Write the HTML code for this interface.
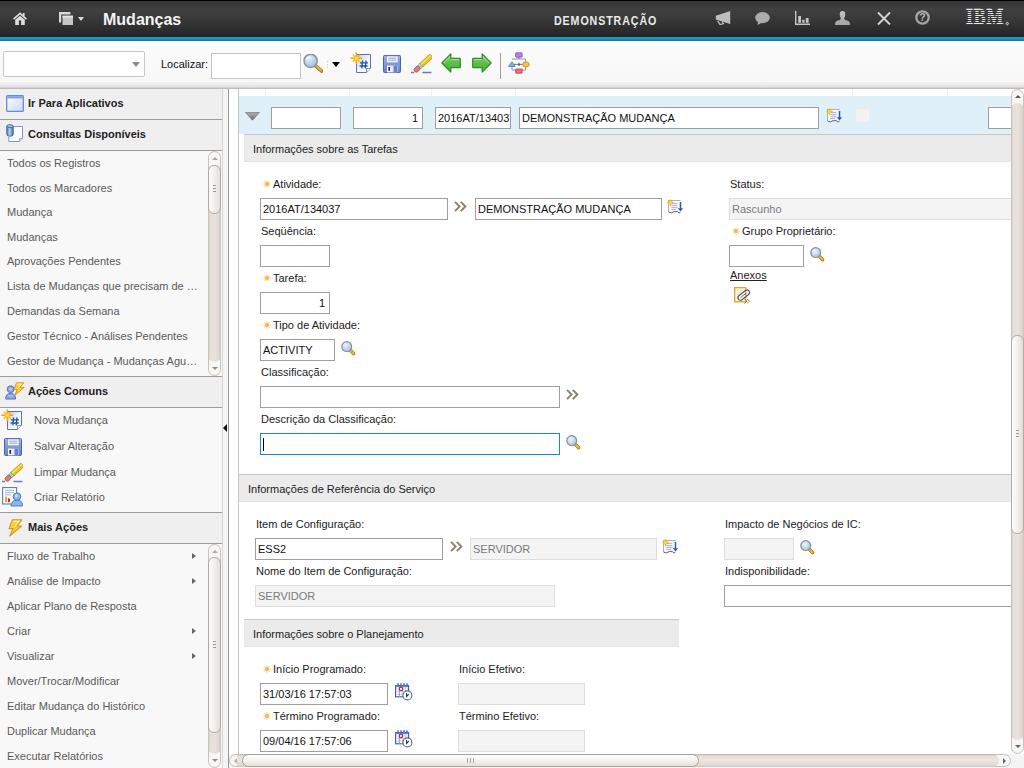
<!DOCTYPE html>
<html><head><meta charset="utf-8"><title>Mudanças</title>
<style>
*{box-sizing:border-box;margin:0;padding:0}
html,body{width:1024px;height:768px;overflow:hidden;background:#fff;font-family:"Liberation Sans",Arial,sans-serif;font-size:11px;color:#222}
#root{position:absolute;left:0;top:0;width:1024px;height:768px;overflow:hidden}
#root div,#root svg,#root span,#root i,#root b{position:absolute;display:block}
#hdr{left:0;top:0;width:1024px;height:37px;background:linear-gradient(#000 0,#000 1px,#343434 1px,#404040 9px,#393939 18px,#2f2f2f 28px,#262626 35px,#202020 37px)}
#hdrline{left:0;top:37px;width:1024px;height:4px;background:linear-gradient(#1e9cd2,#1a8cc0 50%,#1078aa)}
#title{left:103px;top:10px;font-size:16px;font-weight:bold;color:#f4f4f4;line-height:20px;white-space:nowrap}
#demo{left:554px;top:12.5px;font-size:13px;color:#eaeaea;line-height:16px;white-space:nowrap;transform-origin:0 0;transform:scaleX(.82);letter-spacing:1.1px;font-weight:bold}
#tb{left:0;top:41px;width:1024px;height:48px;background:linear-gradient(#fcfcfc 0,#f7f7f7 41px,#eee 42px,#eee 43.5px,#e6e6e6 44.5px,#e4e4e4 45.5px,#d4d4d4 46.5px,#bcbcbc 47.2px,#bcbcbc 48px)}
.inp{background:#fff;border:1px solid #9e9e9e;height:22px;font-size:11px;line-height:20px;padding:0 2px;white-space:nowrap;overflow:hidden;color:#111}
.inp.ro{background:#f4f4f4;border-color:#dedede;color:#7a7a7a}
.lbl{font-size:11px;line-height:14px;white-space:nowrap;color:#222}
#left{left:0;top:89px;width:222px;height:679px;background:#f8f8f8}
.ph{left:0;width:222px;height:32px;background:#efefef;border-top:1px solid #9b9b9b;border-bottom:1px solid #9b9b9b}
.pht{font-weight:bold;font-size:11px;line-height:14px;color:#222;white-space:nowrap;left:28px}
.li{left:7px;font-size:11px;line-height:14px;color:#5a5a5a;white-space:nowrap}
.sec{background:#ebebeb;border-top:1px solid #c8c8c8;border-bottom:1px solid #e2e5e8;height:28px}
.sect{line-height:14px;white-space:nowrap;color:#222}
.req{width:8px;height:8px;border-radius:50%;background:radial-gradient(circle,#f5b040 0,#f7c070 30%,rgba(250,212,150,.7) 55%,rgba(255,255,255,0) 72%)}
.vcap{width:13px;background:#f8f6f4;border:1px solid #c9c0b9;border-radius:6.5px}
.vs{width:13px;border-radius:6.5px;background:linear-gradient(90deg,#c4bab3 0,#e6dfda 2px,#e9e1dc 7px,#e0d7d1 11px,#c9c0b9 13px)}
.va{width:0;height:0;border-left:3px solid transparent;border-right:3px solid transparent}
.va.up{border-bottom:3px solid #aaa}.va.dn{border-top:3px solid #8a8a8a}.va.up.dk{border-bottom-color:#555}.va.dn.dk{border-top-color:#666}
.vth{width:13px;border:1px solid #b3a9a1;border-radius:6px;background:linear-gradient(90deg,#fdfdfc 0,#f3efec 50%,#e4ddd8 100%)}
.grip{width:3px;height:7px;background:repeating-linear-gradient(#999 0,#999 1px,transparent 1px,transparent 3px)}
.sub{width:0;height:0;border-top:3.5px solid transparent;border-bottom:3.5px solid transparent;border-left:4px solid #666}
</style></head><body>
<div id="root">
<div id="hdr"></div><div id="hdrline"></div>

<svg style="left:13px;top:12px" width="14" height="13" viewBox="0 0 14 13"><path d="M7 0.3 L0 6.6 L1.1 7.7 L7 2.5 L12.9 7.7 L14 6.6 L11.6 4.4 V1 H9.8 V2.8 Z" fill="#dcdcdc"/><path d="M2.2 7.8 L7 3.7 L11.8 7.8 V13 H8.1 V8.6 H5.9 V13 H2.2 Z" fill="#dcdcdc"/></svg>
<svg style="left:59px;top:12px" width="14" height="13" viewBox="0 0 14 13"><path d="M0 0 H11.4 V2.4 H2.2 V10.6 H0 Z" fill="#dadada"/><rect x="3.5" y="3.7" width="10.5" height="9.3" fill="#c6c6c6"/><rect x="3.5" y="3.7" width="10.5" height="2" fill="#e4e4e4"/></svg>
<i style="left:78px;top:17px;width:0;height:0;border-left:3.5px solid transparent;border-right:3.5px solid transparent;border-top:4px solid #ddd"></i>
<div id="title">Mudanças</div><div id="demo">DEMONSTRAÇÃO</div>
<svg style="left:715px;top:11px" width="16" height="14" viewBox="0 0 16 14"><path d="M15.2 0 V13 L.8 8.6 V4.8 Z" fill="#bcbcbc"/><path d="M2.6 9.6 L5 13.6 L8.4 12.6 L7 10.6" fill="none" stroke="#bcbcbc" stroke-width="1.3"/></svg>
<svg style="left:755px;top:12px" width="15" height="13" viewBox="0 0 15 13"><ellipse cx="7.5" cy="5.6" rx="7.3" ry="5.6" fill="#acacac"/><path d="M3 8.5 L2.6 13 L7.4 10.4 Z" fill="#acacac"/></svg>
<svg style="left:795px;top:11px" width="15" height="14" viewBox="0 0 15 14"><path d="M.7 0 V13.2 H15" fill="none" stroke="#c6c6c6" stroke-width="1.4"/><rect x="3.2" y="5" width="2.8" height="6.8" fill="#c6c6c6"/><rect x="7.2" y="8.8" width="2.4" height="3" fill="#c6c6c6"/><rect x="10.8" y="7" width="2.8" height="4.8" fill="#c6c6c6"/></svg>
<svg style="left:835px;top:11px" width="15" height="14" viewBox="0 0 15 14"><defs><linearGradient id="pg" x1="0" y1="0" x2="0" y2="1"><stop offset="0" stop-color="#c4c4c4"/><stop offset="1" stop-color="#a2a2a2"/></linearGradient></defs><path d="M7.5 0 C9.6 0 10.4 1.6 10.3 3.6 C10.2 5.4 9.6 6.4 9.2 7 C9.2 8.6 10 9 12 9.6 C14.2 10.3 15 11.4 15 14 H0 C0 11.4 0.8 10.3 3 9.6 C5 9 5.8 8.6 5.8 7 C5.4 6.4 4.8 5.4 4.7 3.6 C4.6 1.6 5.4 0 7.5 0 Z" fill="url(#pg)"/></svg>
<svg style="left:877px;top:12px" width="14" height="13" viewBox="0 0 14 13"><path d="M1 0.5 L13 12.5 M13 0.5 L1 12.5" stroke="#d0d0d0" stroke-width="2" fill="none"/></svg>
<svg style="left:915px;top:10px" width="15" height="15" viewBox="0 0 15 15"><circle cx="7.5" cy="7.5" r="6.2" fill="none" stroke="#a6a6a6" stroke-width="2.3"/><text x="7.5" y="11.2" text-anchor="middle" font-family="Liberation Sans,sans-serif" font-weight="bold" font-size="10.5" fill="#b8b8b8">?</text></svg>
<div id="ibm" style="left:966px;top:8px;width:39px;height:17px;overflow:hidden"><span style="left:0;top:-6.3px;font-family:'Liberation Serif',serif;font-weight:bold;font-size:24px;line-height:28px;color:#e6e6e6;-webkit-text-stroke:.5px #e6e6e6;transform-origin:0 0;transform:scaleX(.74);letter-spacing:1.2px;white-space:nowrap">IBM</span><i style="left:0;top:.6px;width:40px;height:17px;background:repeating-linear-gradient(transparent 0,transparent 1.05px,#3a3a3a 1.05px,#3a3a3a 1.95px)"></i></div>
<i style="left:1005.5px;top:21.5px;width:2.5px;height:2.5px;transform:rotate(45deg);border:.7px solid #aaa"></i>
<div id="tb"></div>
<div class="inp" style="left:3px;top:51px;width:142px;height:26px;border-color:#c8c8c8;border-radius:2px"></div>
<i style="left:132px;top:62px;width:0;height:0;border-left:4.5px solid transparent;border-right:4.5px solid transparent;border-top:5px solid #8a8a8a"></i>
<div class="lbl" style="left:161px;top:57px;color:#111">Localizar:</div>
<div class="inp" style="left:211px;top:53px;width:90px;height:26px;border-color:#c4c4c4"></div>
<svg style="left:303px;top:54px" width="20" height="19" viewBox="0 0 20 19"><defs><radialGradient id="mgL" cx="38%" cy="32%" r="75%"><stop offset="0" stop-color="#e4f0fb"/><stop offset=".5" stop-color="#bcd6f0"/><stop offset="1" stop-color="#9cc0e6"/></radialGradient></defs>
<path d="M12.6 11.8 L18.6 17" stroke="#9c6410" stroke-width="3.6" stroke-linecap="round"/><path d="M12.8 11.8 L18.4 16.7" stroke="#f2b234" stroke-width="2.1" stroke-linecap="round"/>
<circle cx="7.6" cy="6.8" r="6.6" fill="url(#mgL)" stroke="#8c949e" stroke-width="1.5"/><path d="M3.6 6.2 A4.2 4.2 0 0 1 7.4 2.8" stroke="#fff" stroke-width="1.2" fill="none" opacity=".8"/></svg>
<i style="left:327px;top:61px;width:1px;height:9px;background:repeating-linear-gradient(#c8c8c8 0,#c8c8c8 1px,transparent 1px,transparent 3px)"></i>
<i style="left:332px;top:62px;width:0;height:0;border-left:4.7px solid transparent;border-right:4.7px solid transparent;border-top:5.2px solid #000"></i>
<svg style="left:350px;top:52px" width="22" height="22" viewBox="0 0 22 22"><defs><linearGradient id="ng" x1="0" y1="0" x2="1" y2="1"><stop offset="0" stop-color="#b9c9e8"/><stop offset=".5" stop-color="#f1f5fc"/><stop offset="1" stop-color="#fff"/></linearGradient></defs>
<path d="M6.5 2.5 H20.5 V16.5 L16.5 20.5 H6.5 Z" fill="url(#ng)" stroke="#6070a8" stroke-width="1"/><path d="M20.5 16.5 H16.5 V20.5" fill="#fff" stroke="#6070a8" stroke-width=".8"/>
<path d="M12.6 8.4 L11.8 16.4 M16 8.4 L15.2 16.4 M10 10.8 H18 M9.6 14 H17.6" stroke="#1c58a8" stroke-width="1.35" fill="none"/><g transform="translate(.8 .8)"><path d="M5.5 -.4 V11.4 M-.4 5.5 H11.4" stroke="#f8a404" stroke-width="1.5"/><path d="M2 2 L9 9 M9 2 L2 9" stroke="#f9b41c" stroke-width="1.3"/><circle cx="5.5" cy="5.5" r="2.2" fill="#fbc410"/><circle cx="5.5" cy="5.5" r="1.2" fill="#fff04a"/></g></svg>
<svg style="left:383px;top:55px" width="18" height="18" viewBox="0 0 18 18"><defs><linearGradient id="sg" x1="0" y1="0" x2="0" y2="1"><stop offset="0" stop-color="#9db0e6"/><stop offset="1" stop-color="#6a82cc"/></linearGradient><linearGradient id="sg2" x1="0" y1="0" x2="1" y2="0"><stop offset="0" stop-color="#fff"/><stop offset="1" stop-color="#c8d0e6"/></linearGradient></defs>
<rect x=".5" y=".5" width="17" height="17" rx="1" fill="url(#sg)" stroke="#4a62b2"/><rect x="3.5" y="1" width="11.5" height="6.8" fill="#f2f5fb" stroke="#7a8cc4" stroke-width=".6"/><path d="M5.4 3.2 H13.2 M5.4 5.2 H13.2" stroke="#8f9bb8" stroke-width=".9"/>
<rect x="4" y="10.6" width="10.6" height="6.8" fill="url(#sg2)"/><rect x="10.6" y="10.6" width="3.4" height="6.8" fill="#6980c6"/><rect x="5.4" y="12" width="1.6" height="3.8" fill="#222"/></svg>
<svg style="left:411px;top:54px" width="21" height="20" viewBox="0 0 21 20"><path d="M0 18.4 H3.2 M11.4 18.4 H20.4" stroke="#6b78c8" stroke-width="1.5"/>
<g transform="translate(5.6 15.6) rotate(-43)"><rect x="-2.6" y="-2.3" width="6.4" height="4.6" rx="2.2" fill="#dd7a6c" stroke="#a8483e" stroke-width=".7"/><rect x="3.6" y="-2.3" width="3" height="4.6" fill="#5fb4b0" stroke="#3f7e7c" stroke-width=".4"/><path d="M4.6 -2.3 V2.3 M5.8 -2.3 V2.3" stroke="#fff" stroke-width=".6"/><path d="M6.6 -2.3 H19.6 L20.4 -1.4 V2.3 H6.6 Z" fill="#e8c020" stroke="#9c7c14" stroke-width=".6"/><rect x="6.8" y="-1.4" width="13.2" height="1.4" fill="#fae36a"/></g></svg>
<svg style="left:441px;top:53px" width="20" height="20" viewBox="0 0 20 20"><defs><linearGradient id="agl" x1="0" y1="0" x2="0" y2="1"><stop offset="0" stop-color="#9cdc86"/><stop offset=".45" stop-color="#62bf50"/><stop offset="1" stop-color="#48ac3a"/></linearGradient></defs>
<path d="M9.8 .9 L.9 10 L9.8 19.1 V14.6 H18.8 Q19.3 14.6 19.3 14 V6 Q19.3 5.4 18.8 5.4 H9.8 Z" fill="url(#agl)" stroke="#2c8c26" stroke-width="1.2" stroke-linejoin="round"/><path d="M8.8 3.8 L2.8 10 M10.4 6.6 H18.2" stroke="#c6eeb4" stroke-width="1" fill="none" opacity=".75"/></svg>
<svg style="left:472px;top:53px" width="20" height="20" viewBox="0 0 20 20"><g transform="translate(20 0) scale(-1 1)"><defs><linearGradient id="agr" x1="0" y1="0" x2="0" y2="1"><stop offset="0" stop-color="#9cdc86"/><stop offset=".45" stop-color="#62bf50"/><stop offset="1" stop-color="#48ac3a"/></linearGradient></defs>
<path d="M9.8 .9 L.9 10 L9.8 19.1 V14.6 H18.8 Q19.3 14.6 19.3 14 V6 Q19.3 5.4 18.8 5.4 H9.8 Z" fill="url(#agr)" stroke="#2c8c26" stroke-width="1.2" stroke-linejoin="round"/><path d="M8.8 3.8 L2.8 10 M10.4 6.6 H18.2" stroke="#c6eeb4" stroke-width="1" fill="none" opacity=".75"/></g></svg>
<i style="left:500px;top:53px;width:1px;height:26px;background:#a89f90"></i>
<svg style="left:508px;top:52px" width="22" height="22" viewBox="0 0 22 22"><path d="M4 7 H17.6 V18 H4 V14" stroke="#8a8a96" stroke-width=".9" fill="none"/><path d="M11 5 V7 M6 12.4 H15" stroke="#6a6a76" stroke-width=".9" fill="none"/><path d="M11 10.8 V14" stroke="#444" stroke-width="1"/>
<rect x="7.6" y=".8" width="6.6" height="4.4" rx=".6" fill="#b97fe6" stroke="#8a50c0" stroke-width=".8"/><path d="M.6 14.4 L3.9 9.8 L7.2 14.4 Z" fill="#7db4f0" stroke="#3e78c0" stroke-width=".8"/><ellipse cx="17.9" cy="12.4" rx="3.3" ry="2.5" fill="#f8c438" stroke="#c08c18" stroke-width=".8"/><rect x="7.6" y="17" width="6.6" height="4.2" rx=".6" fill="#ee7078" stroke="#b8404a" stroke-width=".8"/></svg>
<div id="left"></div>
<div class="ph" style="top:89px;height:31px;border-top:0"></div><svg style="left:6px;top:95px" width="18" height="17" viewBox="0 0 18 17"><defs><linearGradient id="apg" x1="0" y1="0" x2="1" y2="1"><stop offset="0" stop-color="#fff"/><stop offset="1" stop-color="#c9d8f0"/></linearGradient></defs><rect x=".7" y=".7" width="16.6" height="15.6" rx=".8" fill="url(#apg)" stroke="#6a8ad4" stroke-width="1.3"/><rect x="1.2" y="1.2" width="15.6" height="2.2" fill="#7fa0e2"/></svg><div class="pht" style="top:96px">Ir Para Aplicativos</div>
<div class="ph" style="top:119px"></div><svg style="left:6px;top:124px" width="18" height="19" viewBox="0 0 18 19"><path d="M5.5 2.5 H16.5 V14.5 L13.5 17.5 H2.8 V13" fill="#fbfcfe" stroke="#8a96b8" stroke-width="1"/><path d="M16.5 14.5 H13.5 V17.5" fill="#e4e8f2" stroke="#8a96b8" stroke-width=".8"/>
<defs><linearGradient id="qg" x1="0" y1="0" x2="1" y2="0"><stop offset="0" stop-color="#4a78b8"/><stop offset=".45" stop-color="#b5d2ee"/><stop offset="1" stop-color="#3e68a8"/></linearGradient></defs><path d="M.8 2.2 V10.6 Q.8 12.2 4 12.2 Q7.2 12.2 7.2 10.6 V2.2 Z" fill="url(#qg)" stroke="#2f5596" stroke-width=".8"/><ellipse cx="4" cy="2.2" rx="3.2" ry="1.5" fill="#9cc0e6" stroke="#2f5596" stroke-width=".8"/></svg><div class="pht" style="top:127px">Consultas Disponíveis</div>
<div class="li" style="top:156px">Todos os Registros</div>
<div class="li" style="top:181px">Todos os Marcadores</div>
<div class="li" style="top:205px">Mudança</div>
<div class="li" style="top:230px">Mudanças</div>
<div class="li" style="top:254px">Aprovações Pendentes</div>
<div class="li" style="top:279px">Lista de Mudanças que precisam de …</div>
<div class="li" style="top:304px">Demandas da Semana</div>
<div class="li" style="top:329px">Gestor Técnico - Análises Pendentes</div>
<div class="li" style="top:354px">Gestor de Mudança - Mudanças Agu…</div>
<div class="vcap" style="left:208px;top:151px;height:225px"></div>
<div class="vs" style="left:208px;top:165px;height:197px"></div>
<i class="va up" style="left:211.5px;top:157px"></i><i class="va dn" style="left:211.5px;top:367px"></i>
<div class="vth" style="left:208px;top:165px;height:49px"></div><i class="grip" style="left:213px;top:185px"></i>
<div class="ph" style="top:376px"></div><svg style="left:5px;top:382px" width="20" height="18" viewBox="0 0 20 18"><circle cx="5.6" cy="7.2" r="3.4" fill="#8aa6e0" stroke="#5877c0" stroke-width="1"/><path d="M.6 17 Q.6 11.4 5.6 11.4 Q10.6 11.4 10.6 17 Z" fill="#8aa6e0" stroke="#5877c0" stroke-width="1"/><circle cx="5.6" cy="7" r="1.6" fill="#b8c9f0"/><path d="M3.4 14 H7.8" stroke="#b8c9f0" stroke-width="1.2"/>
<path d="M11.6 .8 H18.8 L15 5.4 H19.2 L9.6 13.4 L12.4 7.6 H8.8 Z" fill="#f8cf3a" stroke="#d9971e" stroke-width="1" stroke-linejoin="round"/><path d="M12.4 2 H16.4 L13 6.4" stroke="#fff2a8" stroke-width="1" fill="none"/></svg><div class="pht" style="top:384px">Ações Comuns</div>
<svg style="left:1px;top:409px" width="22" height="22" viewBox="0 0 22 22"><defs><linearGradient id="ng" x1="0" y1="0" x2="1" y2="1"><stop offset="0" stop-color="#b9c9e8"/><stop offset=".5" stop-color="#f1f5fc"/><stop offset="1" stop-color="#fff"/></linearGradient></defs>
<path d="M6.5 2.5 H20.5 V16.5 L16.5 20.5 H6.5 Z" fill="url(#ng)" stroke="#6070a8" stroke-width="1"/><path d="M20.5 16.5 H16.5 V20.5" fill="#fff" stroke="#6070a8" stroke-width=".8"/>
<path d="M12.6 8.4 L11.8 16.4 M16 8.4 L15.2 16.4 M10 10.8 H18 M9.6 14 H17.6" stroke="#1c58a8" stroke-width="1.35" fill="none"/><g transform="translate(.8 .8)"><path d="M5.5 -.4 V11.4 M-.4 5.5 H11.4" stroke="#f8a404" stroke-width="1.5"/><path d="M2 2 L9 9 M9 2 L2 9" stroke="#f9b41c" stroke-width="1.3"/><circle cx="5.5" cy="5.5" r="2.2" fill="#fbc410"/><circle cx="5.5" cy="5.5" r="1.2" fill="#fff04a"/></g></svg>
<div class="li" style="left:34px;top:413px">Nova Mudança</div>
<svg style="left:4px;top:438px" width="18" height="18" viewBox="0 0 18 18"><defs><linearGradient id="sg" x1="0" y1="0" x2="0" y2="1"><stop offset="0" stop-color="#9db0e6"/><stop offset="1" stop-color="#6a82cc"/></linearGradient><linearGradient id="sg2" x1="0" y1="0" x2="1" y2="0"><stop offset="0" stop-color="#fff"/><stop offset="1" stop-color="#c8d0e6"/></linearGradient></defs>
<rect x=".5" y=".5" width="17" height="17" rx="1" fill="url(#sg)" stroke="#4a62b2"/><rect x="3.5" y="1" width="11.5" height="6.8" fill="#f2f5fb" stroke="#7a8cc4" stroke-width=".6"/><path d="M5.4 3.2 H13.2 M5.4 5.2 H13.2" stroke="#8f9bb8" stroke-width=".9"/>
<rect x="4" y="10.6" width="10.6" height="6.8" fill="url(#sg2)"/><rect x="10.6" y="10.6" width="3.4" height="6.8" fill="#6980c6"/><rect x="5.4" y="12" width="1.6" height="3.8" fill="#222"/></svg>
<div class="li" style="left:34px;top:439px">Salvar Alteração</div>
<svg style="left:2px;top:463px" width="21" height="20" viewBox="0 0 21 20"><path d="M0 18.4 H3.2 M11.4 18.4 H20.4" stroke="#6b78c8" stroke-width="1.5"/>
<g transform="translate(5.6 15.6) rotate(-43)"><rect x="-2.6" y="-2.3" width="6.4" height="4.6" rx="2.2" fill="#dd7a6c" stroke="#a8483e" stroke-width=".7"/><rect x="3.6" y="-2.3" width="3" height="4.6" fill="#5fb4b0" stroke="#3f7e7c" stroke-width=".4"/><path d="M4.6 -2.3 V2.3 M5.8 -2.3 V2.3" stroke="#fff" stroke-width=".6"/><path d="M6.6 -2.3 H19.6 L20.4 -1.4 V2.3 H6.6 Z" fill="#e8c020" stroke="#9c7c14" stroke-width=".6"/><rect x="6.8" y="-1.4" width="13.2" height="1.4" fill="#fae36a"/></g></svg>
<div class="li" style="left:34px;top:465px">Limpar Mudança</div>
<svg style="left:2px;top:487px" width="21" height="20" viewBox="0 0 21 20"><rect x=".6" y=".6" width="14" height="16.4" fill="#fbfcff" stroke="#6478b8" stroke-width="1.1"/><path d="M3 3.4 H12 M3 5.6 H12 M3 7.8 H9" stroke="#9ea9cc" stroke-width=".9"/><rect x="3" y="9.6" width="2" height="5.6" fill="#f0a818"/><rect x="6" y="11.4" width="2" height="3.8" fill="#d8262c"/>
<circle cx="15" cy="9.6" r="3.8" fill="#8ab4ea" stroke="#4e80c8" stroke-width="1"/><path d="M9 19 Q9 13.2 15 13.2 Q21 13.2 20.4 19 Z" fill="#8ab4ea" stroke="#4e80c8" stroke-width="1"/><circle cx="14.4" cy="8.8" r="1.6" fill="#c4dcf6"/></svg>
<div class="li" style="left:34px;top:490px">Criar Relatório</div>
<div class="ph" style="top:512px"></div><svg style="left:8px;top:519px" width="15" height="18" viewBox="0 0 15 18"><path d="M4.4 .8 H13.8 L9 7 H13.6 L1.6 17.2 L5.2 9.6 H1 Z" fill="#f8cf3a" stroke="#d9971e" stroke-width="1.1" stroke-linejoin="round"/><path d="M5.4 2.2 H11 L6.6 8" stroke="#fff4b0" stroke-width="1.1" fill="none"/></svg><div class="pht" style="top:520px">Mais Ações</div>
<div class="li" style="top:549px">Fluxo de Trabalho</div>
<i class="sub" style="left:192px;top:553px"></i>
<div class="li" style="top:574px">Análise de Impacto</div>
<i class="sub" style="left:192px;top:578px"></i>
<div class="li" style="top:599px">Aplicar Plano de Resposta</div>
<div class="li" style="top:624px">Criar</div>
<i class="sub" style="left:192px;top:628px"></i>
<div class="li" style="top:649px">Visualizar</div>
<i class="sub" style="left:192px;top:653px"></i>
<div class="li" style="top:674px">Mover/Trocar/Modificar</div>
<div class="li" style="top:699px">Editar Mudança do Histórico</div>
<div class="li" style="top:724px">Duplicar Mudança</div>
<div class="li" style="top:749px">Executar Relatórios</div>
<div class="vcap" style="left:208px;top:544px;height:224px"></div>
<div class="vs" style="left:208px;top:558px;height:196px"></div>
<i class="va up" style="left:211.5px;top:550px"></i><i class="va dn" style="left:211.5px;top:759px"></i>
<div class="vth" style="left:208px;top:557px;height:176px"></div><i class="grip" style="left:213px;top:641px"></i>
<div style="left:222px;top:89px;width:7px;height:679px;background:#f4f4f4;border-left:1px solid #d6d6d6;border-right:1px solid #9a9a9a"></div>
<i style="left:223px;top:424px;width:0;height:0;border-top:4px solid transparent;border-bottom:4px solid transparent;border-right:4px solid #111"></i>
<div style="left:229px;top:89px;width:782px;height:665px;background:#fff"></div>
<i style="left:238px;top:89px;width:1px;height:665px;background:#c6c6c6"></i>
<i style="left:265px;top:89px;width:1px;height:45px;background:#f0f0f0"></i>
<i style="left:349px;top:89px;width:1px;height:45px;background:#f0f0f0"></i>
<i style="left:431px;top:89px;width:1px;height:45px;background:#f0f0f0"></i>
<i style="left:515px;top:89px;width:1px;height:45px;background:#f0f0f0"></i>
<i style="left:852px;top:89px;width:1px;height:45px;background:#f0f0f0"></i>
<i style="left:947px;top:89px;width:1px;height:45px;background:#f0f0f0"></i>
<div style="left:239px;top:96px;width:772px;height:38px;background:#dff0f8"></div>
<svg style="left:245px;top:112px" width="15" height="9" viewBox="0 0 15 9"><defs><linearGradient id="tg" x1="0" y1="0" x2="0" y2="1"><stop offset="0" stop-color="#b8b4b4"/><stop offset="1" stop-color="#6a6666"/></linearGradient></defs><path d="M.6 .6 H14.4 L7.5 8.2 Z" fill="url(#tg)" stroke="#7a7676" stroke-width=".8"/></svg>
<div class="inp" style="left:271px;top:107px;width:70px;"></div>
<div class="inp" style="left:353px;top:107px;width:70px;text-align:right;padding-right:4px;">1</div>
<div class="inp" style="left:435px;top:107px;width:76px;">2016AT/134037</div>
<div class="inp" style="left:519px;top:107px;width:300px;">DEMONSTRAÇÃO MUDANÇA</div>
<svg style="left:825px;top:108px" width="18" height="16" viewBox="0 0 18 16"><path d="M2.5 13 V1.5 H14.5" fill="none" stroke="#5c6898" stroke-width="1"/><path d="M2.5 1.5 H14.5 V12.6 L13.2 14.2 L11.4 12.6 H8.2 Q5.4 15 2.5 13 Z" fill="#f6f8fd"/><path d="M2.5 13 Q5.4 15 8.2 12.6 H11.4 L13.2 14.2 L14.4 12.8" fill="none" stroke="#5c6060" stroke-width="1"/><path d="M5.4 4.6 H11.4 M5.4 6.6 H11.4 M5.4 8.6 H11.4 M5.4 10.6 H10" stroke="#a4a8dc" stroke-width=".9"/>
<path d="M14.5 3 V11" stroke="#2c58c0" stroke-width="1.5"/><path d="M11.9 9.2 H17.1 L14.5 12.6 Z" fill="#2c58c0"/><path d="M4.4 -.4 L5.6 2.3 L8.2 3.5 L5.6 4.7 L4.4 7.4 L3.2 4.7 L.6 3.5 L3.2 2.3 Z" fill="#f6b40c"/><circle cx="4.4" cy="3.5" r="1.5" fill="#ffdf20"/></svg>
<i style="left:856px;top:109px;width:13px;height:13px;background:#f4f1ef;border-radius:1px"></i>
<div class="inp" style="left:988px;top:107px;width:30px;"></div>
<div class="sec" style="left:244px;top:134px;width:767px"></div><div class="sect" style="left:253px;top:142px">Informações sobre as Tarefas</div>
<svg style="left:263px;top:180px" width="8" height="8" viewBox="0 0 8 8"><path d="M4 .2 V7.8 M.2 4 H7.8 M1.3 1.3 L6.7 6.7 M6.7 1.3 L1.3 6.7" stroke="#fad29a" stroke-width="1.1"/><circle cx="4" cy="4" r="2" fill="#f7b955"/></svg><div class="lbl" style="left:273px;top:177px">Atividade:</div>
<div class="inp" style="left:260px;top:198px;width:188px;">2016AT/134037</div>
<svg style="left:454px;top:201px" width="13" height="11" viewBox="0 0 13 11"><path d="M1 .8 L5.6 5.5 L1 10.2 M6.8 .8 L11.4 5.5 L6.8 10.2" fill="none" stroke="#8c8068" stroke-width="1.9"/></svg>
<div class="inp" style="left:475px;top:198px;width:187px;">DEMONSTRAÇÃO MUDANÇA</div>
<svg style="left:666px;top:199px" width="18" height="16" viewBox="0 0 18 16"><path d="M2.5 13 V1.5 H14.5" fill="none" stroke="#5c6898" stroke-width="1"/><path d="M2.5 1.5 H14.5 V12.6 L13.2 14.2 L11.4 12.6 H8.2 Q5.4 15 2.5 13 Z" fill="#f6f8fd"/><path d="M2.5 13 Q5.4 15 8.2 12.6 H11.4 L13.2 14.2 L14.4 12.8" fill="none" stroke="#5c6060" stroke-width="1"/><path d="M5.4 4.6 H11.4 M5.4 6.6 H11.4 M5.4 8.6 H11.4 M5.4 10.6 H10" stroke="#a4a8dc" stroke-width=".9"/>
<path d="M14.5 3 V11" stroke="#2c58c0" stroke-width="1.5"/><path d="M11.9 9.2 H17.1 L14.5 12.6 Z" fill="#2c58c0"/><path d="M4.4 -.4 L5.6 2.3 L8.2 3.5 L5.6 4.7 L4.4 7.4 L3.2 4.7 L.6 3.5 L3.2 2.3 Z" fill="#f6b40c"/><circle cx="4.4" cy="3.5" r="1.5" fill="#ffdf20"/></svg>
<div class="lbl" style="left:261px;top:224px">Seqüência:</div>
<div class="inp" style="left:260px;top:245px;width:70px;"></div>
<svg style="left:263px;top:274px" width="8" height="8" viewBox="0 0 8 8"><path d="M4 .2 V7.8 M.2 4 H7.8 M1.3 1.3 L6.7 6.7 M6.7 1.3 L1.3 6.7" stroke="#fad29a" stroke-width="1.1"/><circle cx="4" cy="4" r="2" fill="#f7b955"/></svg><div class="lbl" style="left:273px;top:271px">Tarefa:</div>
<div class="inp" style="left:260px;top:292px;width:70px;text-align:right;padding-right:4px;">1</div>
<svg style="left:263px;top:321px" width="8" height="8" viewBox="0 0 8 8"><path d="M4 .2 V7.8 M.2 4 H7.8 M1.3 1.3 L6.7 6.7 M6.7 1.3 L1.3 6.7" stroke="#fad29a" stroke-width="1.1"/><circle cx="4" cy="4" r="2" fill="#f7b955"/></svg><div class="lbl" style="left:273px;top:318px">Tipo de Atividade:</div>
<div class="inp" style="left:260px;top:339px;width:75px;">ACTIVITY</div>
<svg style="left:341px;top:341px" width="15" height="15" viewBox="0 0 15 15"><defs><radialGradient id="mgS" cx="40%" cy="35%" r="75%"><stop offset="0" stop-color="#eef5fc"/><stop offset=".55" stop-color="#c0d6f2"/><stop offset="1" stop-color="#a4c2e8"/></radialGradient></defs>
<path d="M9.8 9.8 L12.6 12.6" stroke="#a07018" stroke-width="3.4" stroke-linecap="round"/><path d="M10 10 L12.5 12.5" stroke="#f0b830" stroke-width="2" stroke-linecap="round"/>
<circle cx="5.7" cy="5.6" r="4.9" fill="url(#mgS)" stroke="#8a8e98" stroke-width="1.2"/></svg>
<div class="lbl" style="left:261px;top:365px">Classificação:</div>
<div class="inp" style="left:260px;top:386px;width:300px;"></div>
<svg style="left:566px;top:389px" width="13" height="11" viewBox="0 0 13 11"><path d="M1 .8 L5.6 5.5 L1 10.2 M6.8 .8 L11.4 5.5 L6.8 10.2" fill="none" stroke="#8c8068" stroke-width="1.9"/></svg>
<div class="lbl" style="left:261px;top:412px">Descrição da Classificação:</div>
<div class="inp" style="left:260px;top:433px;width:300px;border-color:#1a8ac6;"></div>
<i style="left:263px;top:438px;width:1px;height:13px;background:#000"></i>
<svg style="left:566px;top:435px" width="15" height="15" viewBox="0 0 15 15"><defs><radialGradient id="mgS" cx="40%" cy="35%" r="75%"><stop offset="0" stop-color="#eef5fc"/><stop offset=".55" stop-color="#c0d6f2"/><stop offset="1" stop-color="#a4c2e8"/></radialGradient></defs>
<path d="M9.8 9.8 L12.6 12.6" stroke="#a07018" stroke-width="3.4" stroke-linecap="round"/><path d="M10 10 L12.5 12.5" stroke="#f0b830" stroke-width="2" stroke-linecap="round"/>
<circle cx="5.7" cy="5.6" r="4.9" fill="url(#mgS)" stroke="#8a8e98" stroke-width="1.2"/></svg>
<div class="lbl" style="left:730px;top:177px">Status:</div>
<div class="inp ro" style="left:729px;top:198px;width:290px;">Rascunho</div>
<svg style="left:732px;top:227px" width="8" height="8" viewBox="0 0 8 8"><path d="M4 .2 V7.8 M.2 4 H7.8 M1.3 1.3 L6.7 6.7 M6.7 1.3 L1.3 6.7" stroke="#fad29a" stroke-width="1.1"/><circle cx="4" cy="4" r="2" fill="#f7b955"/></svg><div class="lbl" style="left:742px;top:224px">Grupo Proprietário:</div>
<div class="inp" style="left:729px;top:245px;width:75px;"></div>
<svg style="left:810px;top:247px" width="15" height="15" viewBox="0 0 15 15"><defs><radialGradient id="mgS" cx="40%" cy="35%" r="75%"><stop offset="0" stop-color="#eef5fc"/><stop offset=".55" stop-color="#c0d6f2"/><stop offset="1" stop-color="#a4c2e8"/></radialGradient></defs>
<path d="M9.8 9.8 L12.6 12.6" stroke="#a07018" stroke-width="3.4" stroke-linecap="round"/><path d="M10 10 L12.5 12.5" stroke="#f0b830" stroke-width="2" stroke-linecap="round"/>
<circle cx="5.7" cy="5.6" r="4.9" fill="url(#mgS)" stroke="#8a8e98" stroke-width="1.2"/></svg>
<div class="lbl" style="left:730px;top:268px;text-decoration:underline">Anexos</div>
<svg style="left:734px;top:287px" width="18" height="17" viewBox="0 0 18 17"><rect x=".7" y=".7" width="11" height="14" fill="#fffefa" stroke="#e2a212" stroke-width="1.3"/><path d="M2.8 3.2 H8.6 M2.8 5.2 H8.6 M2.8 7.2 H6" stroke="#ecd4a0" stroke-width=".9"/>
<rect x="3" y="5.6" width="13.4" height="5" rx="2.5" transform="rotate(-38 9.7 8.1)" fill="none" stroke="#4c5478" stroke-width="1.2"/><path d="M6.6 10.5 L12.4 6" stroke="#4c5478" stroke-width=".9"/>
<path d="M10.4 12 L12.8 14.2 L10.4 16.4" fill="none" stroke="#6a6458" stroke-width="1"/><path d="M13 12 L15.4 14.2 L13 16.4" fill="none" stroke="#b8922c" stroke-width="1"/></svg>
<div class="sec" style="left:239px;top:474px;width:772px"></div><div class="sect" style="left:248px;top:482px">Informações de Referência do Serviço</div>
<div class="lbl" style="left:256px;top:517px">Item de Configuração:</div>
<div class="inp" style="left:255px;top:538px;width:188px;">ESS2</div>
<svg style="left:450px;top:541px" width="13" height="11" viewBox="0 0 13 11"><path d="M1 .8 L5.6 5.5 L1 10.2 M6.8 .8 L11.4 5.5 L6.8 10.2" fill="none" stroke="#8c8068" stroke-width="1.9"/></svg>
<div class="inp ro" style="left:470px;top:538px;width:187px;">SERVIDOR</div>
<svg style="left:661px;top:539px" width="18" height="16" viewBox="0 0 18 16"><path d="M2.5 13 V1.5 H14.5" fill="none" stroke="#5c6898" stroke-width="1"/><path d="M2.5 1.5 H14.5 V12.6 L13.2 14.2 L11.4 12.6 H8.2 Q5.4 15 2.5 13 Z" fill="#f6f8fd"/><path d="M2.5 13 Q5.4 15 8.2 12.6 H11.4 L13.2 14.2 L14.4 12.8" fill="none" stroke="#5c6060" stroke-width="1"/><path d="M5.4 4.6 H11.4 M5.4 6.6 H11.4 M5.4 8.6 H11.4 M5.4 10.6 H10" stroke="#a4a8dc" stroke-width=".9"/>
<path d="M14.5 3 V11" stroke="#2c58c0" stroke-width="1.5"/><path d="M11.9 9.2 H17.1 L14.5 12.6 Z" fill="#2c58c0"/><path d="M4.4 -.4 L5.6 2.3 L8.2 3.5 L5.6 4.7 L4.4 7.4 L3.2 4.7 L.6 3.5 L3.2 2.3 Z" fill="#f6b40c"/><circle cx="4.4" cy="3.5" r="1.5" fill="#ffdf20"/></svg>
<div class="lbl" style="left:256px;top:564px">Nome do Item de Configuração:</div>
<div class="inp ro" style="left:255px;top:585px;width:300px;">SERVIDOR</div>
<div class="lbl" style="left:725px;top:517px">Impacto de Negócios de IC:</div>
<div class="inp ro" style="left:724px;top:538px;width:70px;"></div>
<svg style="left:800px;top:540px" width="15" height="15" viewBox="0 0 15 15"><defs><radialGradient id="mgS" cx="40%" cy="35%" r="75%"><stop offset="0" stop-color="#eef5fc"/><stop offset=".55" stop-color="#c0d6f2"/><stop offset="1" stop-color="#a4c2e8"/></radialGradient></defs>
<path d="M9.8 9.8 L12.6 12.6" stroke="#a07018" stroke-width="3.4" stroke-linecap="round"/><path d="M10 10 L12.5 12.5" stroke="#f0b830" stroke-width="2" stroke-linecap="round"/>
<circle cx="5.7" cy="5.6" r="4.9" fill="url(#mgS)" stroke="#8a8e98" stroke-width="1.2"/></svg>
<div class="lbl" style="left:725px;top:564px">Indisponibilidade:</div>
<div class="inp" style="left:724px;top:585px;width:300px;"></div>
<div class="sec" style="left:244px;top:619px;width:435px"></div><div class="sect" style="left:253px;top:627px">Informações sobre o Planejamento</div>
<svg style="left:263px;top:665px" width="8" height="8" viewBox="0 0 8 8"><path d="M4 .2 V7.8 M.2 4 H7.8 M1.3 1.3 L6.7 6.7 M6.7 1.3 L1.3 6.7" stroke="#fad29a" stroke-width="1.1"/><circle cx="4" cy="4" r="2" fill="#f7b955"/></svg><div class="lbl" style="left:273px;top:662px">Início Programado:</div>
<div class="inp" style="left:260px;top:683px;width:128px;">31/03/16 17:57:03</div>
<svg style="left:395px;top:683px" width="18" height="18" viewBox="0 0 18 18"><rect x=".6" y="2.6" width="13" height="11.2" fill="#fff" stroke="#46598c" stroke-width="1.1"/><path d="M1.2 6 H13 M1.2 8.6 H13 M1.2 11.2 H13 M4.4 3.4 V13.4 M7.4 3.4 V13.4 M10.4 3.4 V13.4" stroke="#b4c8ee" stroke-width=".8"/><path d="M4.4 6 V13.4" stroke="#7fa0e8" stroke-width=".9"/>
<path d="M3 .2 V4.2 M6 .2 V4.2 M9 .2 V4.2 M12 .2 V4.2" stroke="#3f74d4" stroke-width="1.5"/><path d="M1.2 3.4 H13" stroke="#5c86d8" stroke-width="1"/><circle cx="6" cy="5.9" r="1.7" fill="#fff" stroke="#d81c2c" stroke-width="1.2"/>
<circle cx="12.4" cy="12.4" r="4.5" fill="#fafcff" stroke="#56688c" stroke-width="1.1"/><path d="M11.6 10 V13.4 L13.8 11.2" stroke="#1c3c24" stroke-width="1.1" fill="none"/></svg>
<svg style="left:263px;top:712px" width="8" height="8" viewBox="0 0 8 8"><path d="M4 .2 V7.8 M.2 4 H7.8 M1.3 1.3 L6.7 6.7 M6.7 1.3 L1.3 6.7" stroke="#fad29a" stroke-width="1.1"/><circle cx="4" cy="4" r="2" fill="#f7b955"/></svg><div class="lbl" style="left:273px;top:709px">Término Programado:</div>
<div class="inp" style="left:260px;top:730px;width:128px;">09/04/16 17:57:06</div>
<svg style="left:395px;top:730px" width="18" height="18" viewBox="0 0 18 18"><rect x=".6" y="2.6" width="13" height="11.2" fill="#fff" stroke="#46598c" stroke-width="1.1"/><path d="M1.2 6 H13 M1.2 8.6 H13 M1.2 11.2 H13 M4.4 3.4 V13.4 M7.4 3.4 V13.4 M10.4 3.4 V13.4" stroke="#b4c8ee" stroke-width=".8"/><path d="M4.4 6 V13.4" stroke="#7fa0e8" stroke-width=".9"/>
<path d="M3 .2 V4.2 M6 .2 V4.2 M9 .2 V4.2 M12 .2 V4.2" stroke="#3f74d4" stroke-width="1.5"/><path d="M1.2 3.4 H13" stroke="#5c86d8" stroke-width="1"/><circle cx="6" cy="5.9" r="1.7" fill="#fff" stroke="#d81c2c" stroke-width="1.2"/>
<circle cx="12.4" cy="12.4" r="4.5" fill="#fafcff" stroke="#56688c" stroke-width="1.1"/><path d="M11.6 10 V13.4 L13.8 11.2" stroke="#1c3c24" stroke-width="1.1" fill="none"/></svg>
<div class="lbl" style="left:459px;top:662px">Início Efetivo:</div>
<div class="inp ro" style="left:458px;top:683px;width:127px;"></div>
<div class="lbl" style="left:459px;top:709px">Término Efetivo:</div>
<div class="inp ro" style="left:458px;top:730px;width:127px;"></div>
<div class="vcap" style="left:1011px;top:89px;height:665px"></div>
<div class="vs" style="left:1011px;top:103px;height:637px"></div>
<i class="va up dk" style="left:1014.5px;top:95px"></i><i class="va dn dk" style="left:1014.5px;top:745px"></i>
<div class="vth" style="left:1011px;top:335px;height:199px"></div>
<i class="grip" style="left:1016px;top:430px"></i>
<div style="left:229px;top:754px;width:795px;height:14px;background:#f4f4f4"></div>
<div style="left:229px;top:754px;width:782px;height:13px;background:#f8f6f4;border:1px solid #c9c0b9;border-radius:6.5px"></div>
<div style="left:237px;top:754px;width:762px;height:13px;border-radius:0 6.5px 6.5px 0;background:linear-gradient(#b8aea7 0,#e6dfda 2px,#ebe4df 7px,#e2d9d3 11px,#cfc6bf 13px)"></div>
<i style="left:234px;top:757.5px;width:0;height:0;border-top:3px solid transparent;border-bottom:3px solid transparent;border-right:3px solid #b4b4b4"></i>
<i style="left:1003px;top:757.5px;width:0;height:0;border-top:3px solid transparent;border-bottom:3px solid transparent;border-left:3px solid #666"></i>
<div style="left:242px;top:754px;width:457px;height:13px;border:1px solid #aaa098;border-radius:6.5px;background:linear-gradient(#fefefd 0,#f5f2ef 50%,#e6e0db 100%)"></div>
<i style="left:467px;top:758px;width:7px;height:5px;background:repeating-linear-gradient(90deg,#a4a4a4 0,#a4a4a4 1px,transparent 1px,transparent 3px)"></i>
</div></body></html>
